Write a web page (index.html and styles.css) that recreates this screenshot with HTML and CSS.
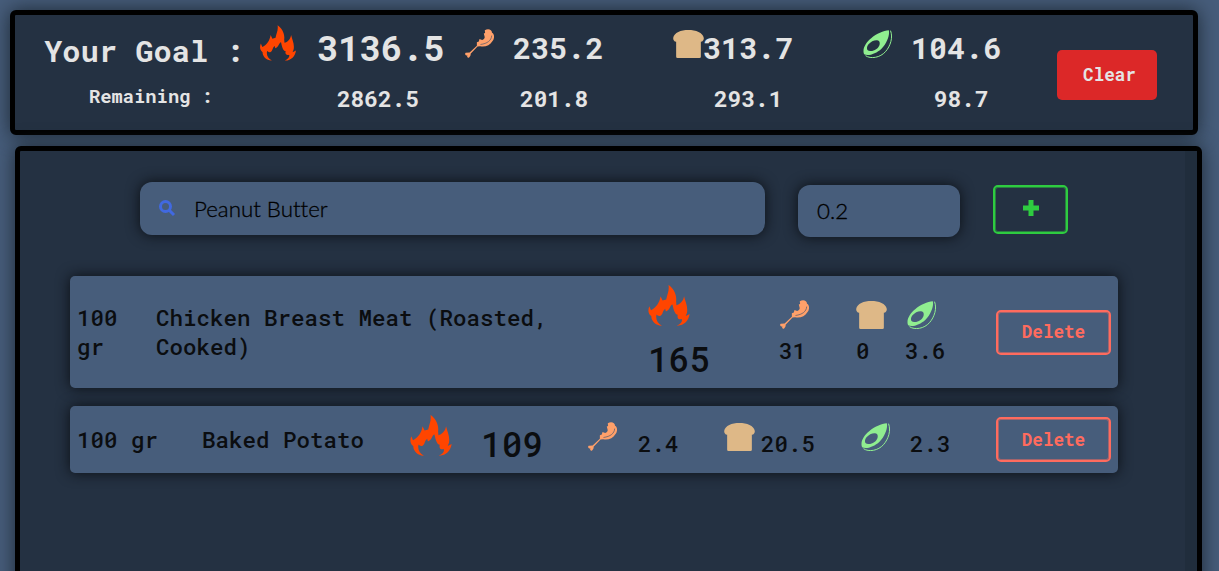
FILE: index.html
```html
<!DOCTYPE html>
<html lang="en">
<head>
<meta charset="utf-8">
<title>Calorie Tracker</title>
<link rel="stylesheet" href="styles.css">
</head>
<body>
<svg class="defs" width="0" height="0">
  <symbol id="fire" viewBox="0 0 125 124"><path d="M61 0C75 9 87 28 84 49L85 61C95 59 106 49 108 34C112 52 120 63 117 84L113 94L125 88C122 108 108 124 86 123C98 118 104 109 101 103C92 106 86 100 89 90C81 89 77 78 73 59C66 60 65 77 53 80L51 72C42 79 45 88 37 93C30 96 25 89 25 89C21 102 27 116 41 123C23 124 8 108 9 94C-2 86-1 74 3 64L8 76C22 70 34 54 37 34L43 47L54 44C57 28 64 18 61 0Z"/></symbol>
  <symbol id="meat" viewBox="0 0 88 88"><path d="M60 4C70-3 82 2 82 11C91 16 89 31 83 37C76 50 60 55 46 52L38 53L17 75C18 82 14 83 12 87C6 88 6 83 7 80C2 81-2 76 2 72L14 71L36 51V40L42 38L44 30L52 33C59 31 61 27 59 21L57 14L61 12Z"/><path class="cut" d="M81 20C80 35 68 44 47 47"/></symbol>
  <symbol id="bread" viewBox="0 0 93 85"><path d="M9 36C3 35 0 30 0 24C3 8 23 0 46 0S90 8 93 24C93 30 90 35 84 36V81Q84 85 80 85H13Q9 85 9 81Z"/></symbol>
  <symbol id="avocado" viewBox="0 0 86 84"><path fill-rule="evenodd" d="M77 1C80 14 73 38 55 56C39 71 16 79 3 73C-4 58 8 37 24 25C40 10 61 3 77 1ZM48 34C42 27 25 32 16 43C8 54 11 63 21 63C33 64 45 56 49 45C50 41 50 37 48 34Z"/><path class="rind" d="M82 2C90 22 82 48 67 65C51 83 23 88 7 77"/></symbol>
</svg>
<header class="goal">
  <div class="totals">
    <div class="line main-line">
      <span class="title">Your Goal :</span>
      <svg class="fire small"><use href="#fire"/></svg>
      <span class="calories">3136.5</span>
      <svg class="meat"><use href="#meat"/></svg>
      <span class="protein">235.2</span>
      <svg class="bread"><use href="#bread"/></svg>
      <span class="carbs">313.7</span>
      <svg class="avocado"><use href="#avocado"/></svg>
      <span class="fat">104.6</span>
    </div>
    <div class="line remaining">
      <span class="label">Remaining :</span>
      <span class="left-calories">2862.5</span>
      <span class="left-protein">201.8</span>
      <span class="left-carbs">293.1</span>
      <span class="left-fat">98.7</span>
    </div>
  </div>
  <button class="clear">Clear</button>
</header>
<main class="panel">
  <div class="content">
    <form class="search">
      <div class="field food"><svg class="lens" viewBox="0 0 16 16"><circle cx="6.5" cy="6.5" r="5"/><path d="M10 10l5 5"/></svg><span>Peanut Butter</span></div>
      <div class="field amount">0.2</div>
      <button class="add" type="button"><svg viewBox="0 0 16 16"><path d="M5.500 0h5v5.500H16v5h-5.500V16h-5v-5.500H0v-5h5.500z"/></svg></button>
    </form>
    <article class="item tall">
      <span class="qty">100<br>gr</span>
      <span class="name">Chicken Breast Meat (Roasted,<br>Cooked)</span>
      <div class="stack energy"><svg class="fire"><use href="#fire"/></svg><span class="kcal">165</span></div>
      <div class="stack s-protein"><svg class="meat"><use href="#meat"/></svg><span>31</span></div>
      <div class="stack s-carbs"><svg class="bread"><use href="#bread"/></svg><span>0</span></div>
      <div class="stack s-fat"><svg class="avocado"><use href="#avocado"/></svg><span>3.6</span></div>
      <button class="delete">Delete</button>
    </article>
    <article class="item short">
      <span class="qty">100 gr</span>
      <span class="name">Baked Potato</span>
      <svg class="fire"><use href="#fire"/></svg>
      <span class="kcal">109</span>
      <svg class="meat"><use href="#meat"/></svg>
      <span class="value v-protein">2.4</span>
      <svg class="bread"><use href="#bread"/></svg>
      <span class="value v-carbs">20.5</span>
      <svg class="avocado"><use href="#avocado"/></svg>
      <span class="value v-fat">2.3</span>
      <button class="delete">Delete</button>
    </article>
  </div>
  <div class="scrollbar"></div>
</main>
</body>
</html>
```
FILE: styles.css
```css
* { box-sizing: border-box; }
html, body { height: 100%; }
body {
  margin: 0;
  padding: 10px 0 0 10px;
  overflow: hidden;
  background: #475d7b;
  color: #0b0d10;
  font-family: "Roboto Mono", "DejaVu Sans Mono", monospace;
  font-size: 22.500px;
  font-weight: 500;
}
svg { display: block; flex: none; overflow: visible; }
.defs { position: absolute; }
span { white-space: nowrap; flex: none; }
button { font: bold 17.6px "Roboto Mono", "DejaVu Sans Mono", monospace; border-radius: 5px; padding: 0; flex: none; }

.fire { width: 42px; height: 41px; fill: #ff4500; }
.fire.small { width: 36px; height: 36px; }
.meat { width: 29px; height: 29px; fill: #ffa06a; }
.bread { width: 31px; height: 28px; fill: #deb887; }
.avocado { width: 29px; height: 28px; fill: #90ee90; }
.cut { fill: none; stroke: #41526c; stroke-width: 2; }
.rind { fill: none; stroke: #90ee90; stroke-width: 3; }

.goal {
  display: flex;
  width: 1188px;
  height: 125px;
  border: 5px solid #000;
  border-radius: 6px;
  background: #243142;
  color: #e4e4e4;
  font-weight: bold;
  box-shadow: 0 0 20px #1c2833;
}
.totals { width: 1042px; }
.line { display: flex; align-items: flex-start; }
.main-line { height: 66px; line-height: 40px; font-size: 30.400px; }
.title { width: 216px; margin: 15px 0 0 29px; }
.main-line .fire { margin-top: 10px; }
.calories { width: 148px; margin: 13px 0 0 21px; font-size: 35.500px; }
.main-line .meat { margin-top: 14px; }
.protein { width: 160px; margin: 12px 0 0 19px; }
.main-line .bread { margin-top: 15px; }
.carbs { width: 160px; margin: 12px 0 0 -1px; }
.main-line .avocado { margin-top: 15px; }
.fat { margin: 12px 0 0 19px; }
.protein, .carbs, .fat { font-size: 30.200px; }
.remaining { line-height: 30px; font-size: 22.800px; }
.label { width: 248px; margin-left: 74px; font-size: 18.800px; }
.remaining span + span { margin-top: 2px; }
.left-calories { width: 183px; }
.left-protein { width: 194px; }
.left-carbs { width: 220px; }
.clear {
  width: 100px;
  height: 50px;
  margin-top: 35px;
  padding: 0 0 1px 5px;
  border: 0;
  background: #dc2828;
  color: #e4e4e4;
}

.panel {
  display: flex;
  width: 1187px;
  height: 450px;
  margin: 11px 0 0 5px;
  border: 5px solid #000;
  border-radius: 6px;
  background: #243142;
  box-shadow: 0 0 20px #1c2833;
}
.content { width: 1165px; }
.scrollbar { width: 12px; background: #202d3c; }
.search { display: flex; margin: 31px 0 39px 120px; height: 55px; }
.field {
  display: flex;
  align-items: center;
  padding-bottom: 1px;
  border-radius: 12px;
  background: #475d7b;
  box-shadow: 0 0 14px #0b0f14;
  font-family: Lato, sans-serif;
  font-size: 22.300px;
  font-weight: 300;
  font-variant-ligatures: none;
  color: #000;
  -webkit-text-stroke: 0.3px #000;
}
.food { width: 625px; height: 53px; padding-left: 19px; }
.lens { width: 16px; height: 16px; margin-right: 19px; fill: none; stroke: #4169e1; stroke-width: 3; }
.amount { width: 162px; height: 52px; margin: 3px 0 0 33px; padding-left: 19px; }
.add {
  display: flex;
  align-items: center;
  justify-content: center;
  width: 75px;
  height: 49px;
  margin: 3px 0 0 33px;
  border: 2px solid #2ecc40;
  background: transparent;
  box-shadow: inset 0 0 0 1px #2ecc4080;
}
.add svg { width: 16px; height: 16px; margin-bottom: 3px; fill: #2ecc40; }

.item {
  display: flex;
  align-items: flex-start;
  width: 1048px;
  margin: 0 0 18px 50px;
  padding-left: 7px;
  border-radius: 5px;
  background: #475d7b;
  box-shadow: 0 0 14px #0b0f14;
}
.tall { height: 112px; line-height: 29px; }
.short { height: 67px; line-height: 30px; }
.kcal { font-size: 34.500px; line-height: 40px; }
.stack { display: flex; flex-direction: column; flex: none; }
.tall .qty { width: 79px; margin-top: 27px; }
.tall .name { width: 492px; margin-top: 27px; }
.energy { width: 132px; margin-top: 9px; gap: 13px; }
.s-protein { width: 76px; margin-top: 24px; gap: 7px; }
.s-protein span { margin-left: -1px; }
.s-carbs { width: 51px; margin-top: 25px; gap: 7px; }
.s-fat { width: 89px; margin-top: 25px; gap: 7px; }
.s-fat span { margin-left: -2px; }
.delete {
  width: 115px;
  height: 45px;
  padding-bottom: 2px;
  border: 2px solid #ff6b5e;
  background: transparent;
  color: #ff6b5e;
  box-shadow: inset 0 0 0 1px #ff6b5e80;
}
.tall .delete { margin-top: 34px; }
.short .qty { width: 125px; margin-top: 18px; }
.short .name { width: 208px; margin-top: 18px; }
.short .fire { margin-top: 9px; }
.short .kcal { width: 107px; margin: 18px 0 0 29px; }
.short .meat { margin-top: 16px; }
.value { margin-top: 22px; }
.v-protein { width: 86px; margin-left: 21px; }
.short .bread, .short .avocado { margin-top: 17px; }
.v-carbs { width: 100px; margin-left: 6px; }
.v-fat { width: 86px; margin-left: 20px; }
.short .delete { margin-top: 11px; padding-bottom: 0; }
```
